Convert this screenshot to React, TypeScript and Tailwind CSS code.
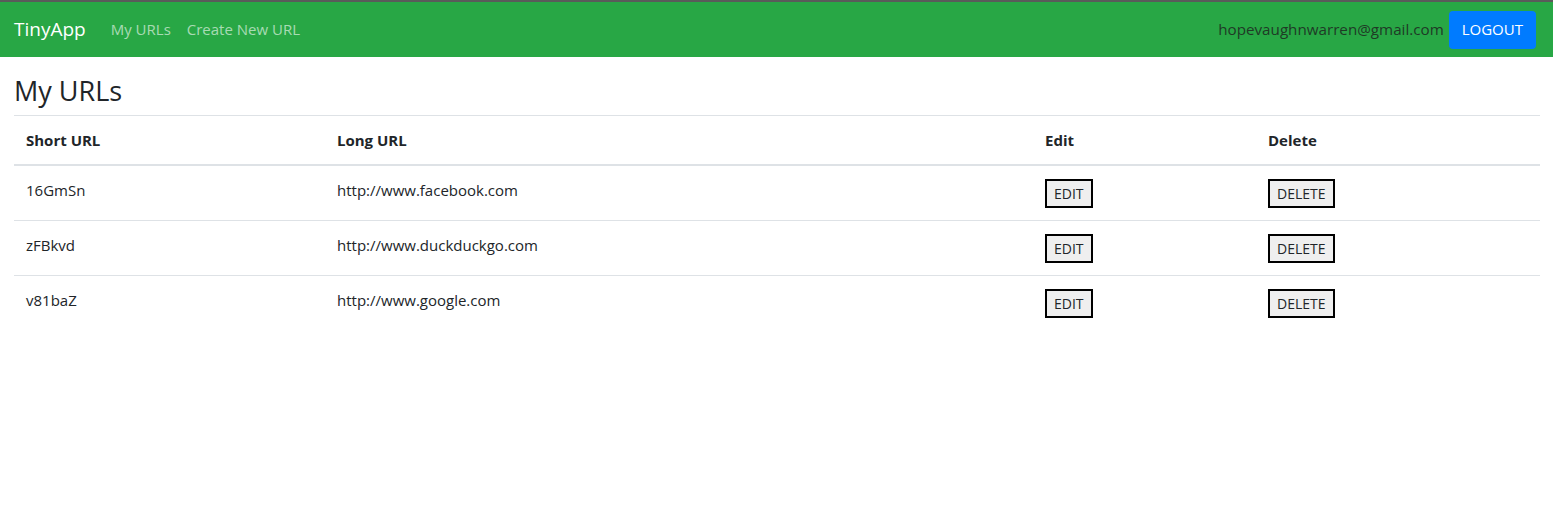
const urls = [
  { short: "16GmSn", long: "http://www.facebook.com" },
  { short: "zFBkvd", long: "http://www.duckduckgo.com" },
  { short: "v81baZ", long: "http://www.google.com" },
];

const App = () => {
  return (
    <div className="min-h-screen bg-white text-[#212529] font-['Open_Sans',sans-serif]">
      {/* Navbar */}
      <nav className="border-t-[2px] border-[#5a5a5a] bg-[#28a745] h-[57px] px-[14px] flex items-center justify-between">
        <div className="flex items-center">
          <span className="text-white text-[19px] mr-[25px]">TinyApp</span>
          <a className="text-white/60 text-[15px] mr-[16px]">My URLs</a>
          <a className="text-white/60 text-[15px]">Create New URL</a>
        </div>
        <div className="flex items-center gap-[4px] mr-[3px]">
          <span className="text-[#1f3a25] text-[15.2px]">hopevaughnwarren@gmail.com</span>
          <button className="bg-[#007bff] text-white text-[15px] rounded-[4px] h-[38px] px-[13px] ml-[1px]">
            LOGOUT
          </button>
        </div>
      </nav>

      {/* Content */}
      <main className="pl-[14px] pr-[13px] pt-[17px]">
        <h3 className="text-[27px] leading-[34px] mb-[7px]">My URLs</h3>
        <table className="w-full border-collapse text-[15px]">
          <colgroup>
            <col className="w-[311px]" />
            <col className="w-[708px]" />
            <col className="w-[223px]" />
            <col />
          </colgroup>
          <thead>
            <tr className="border-t border-[#dee2e6] border-b-2">
              <th className="text-left font-bold px-3 pt-[13px] pb-[12px] align-top">Short URL</th>
              <th className="text-left font-bold px-3 pt-[13px] pb-[12px] align-top">Long URL</th>
              <th className="text-left font-bold px-3 pt-[13px] pb-[12px] align-top">Edit</th>
              <th className="text-left font-bold px-3 pt-[13px] pb-[12px] align-top">Delete</th>
            </tr>
          </thead>
          <tbody>
            {urls.map((u, i) => (
              <tr key={u.short} className={i > 0 ? "border-t border-[#dee2e6]" : ""}>
                <td className={`px-3 pt-[12px] align-top leading-6 ${i === 0 ? "h-[56px]" : "h-[55px]"}`}>
                  {u.short}
                </td>
                <td className="px-3 pt-[12px] align-top leading-6">{u.long}</td>
                <td className="px-3 pt-[13px] align-top">
                  <button className="border-2 border-black bg-[#efefef] text-[14px] h-[29px] px-[7px]">
                    EDIT
                  </button>
                </td>
                <td className="px-3 pt-[13px] align-top">
                  <button className="border-2 border-black bg-[#efefef] text-[14px] h-[29px] px-[7px]">
                    DELETE
                  </button>
                </td>
              </tr>
            ))}
          </tbody>
        </table>
      </main>
    </div>
  );
};

export default App;
